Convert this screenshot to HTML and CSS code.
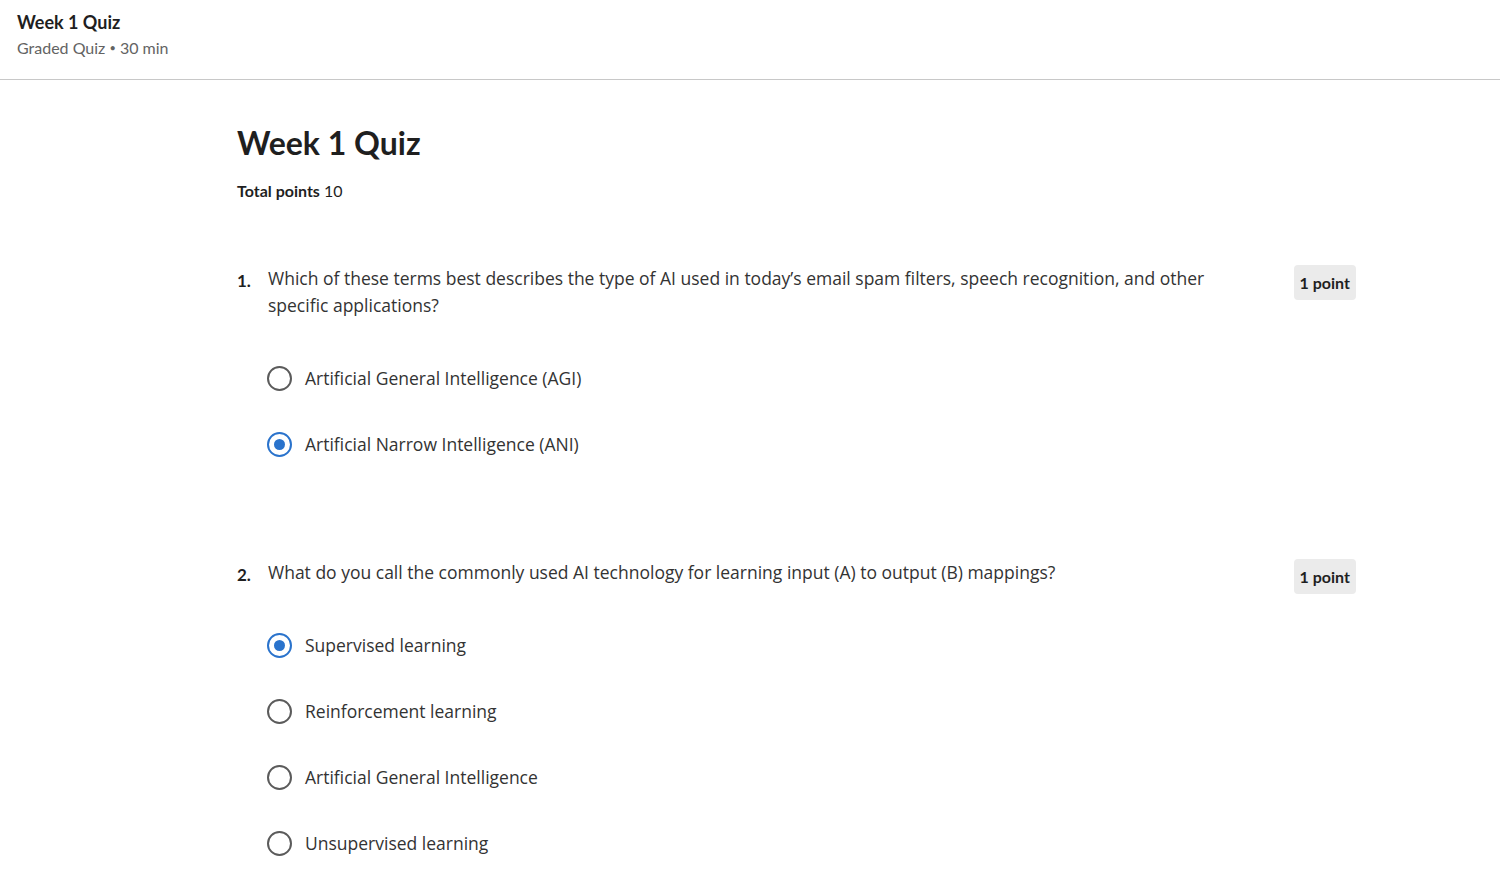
FILE: index.html
```html
<!DOCTYPE html>
<html>
<head>
<meta charset="utf-8">
<link rel="stylesheet" href="styles.css">
</head>
<body>
<header class="topbar">
  <div class="topbar-title">Week 1 Quiz</div>
  <div class="topbar-sub">Graded Quiz <span class="dot">•</span> 30 min</div>
</header>
<main class="content">
  <h1 class="quiz-title">Week 1 Quiz</h1>
  <div class="total"><strong>Total points</strong> 10</div>

  <section class="question q1">
    <div class="q-head">
      <span class="q-num">1.</span>
      <p class="q-text">Which of these terms best describes the type of AI used in today’s email spam filters, speech recognition, and other specific applications?</p>
      <span class="points">1 point</span>
    </div>
    <ul class="options">
      <li class="option"><span class="radio"></span><span>Artificial General Intelligence (AGI)</span></li>
      <li class="option"><span class="radio checked"></span><span>Artificial Narrow Intelligence (ANI)</span></li>
    </ul>
  </section>

  <section class="question q2">
    <div class="q-head">
      <span class="q-num">2.</span>
      <p class="q-text">What do you call the commonly used AI technology for learning input (A) to output (B) mappings?</p>
      <span class="points">1 point</span>
    </div>
    <ul class="options">
      <li class="option"><span class="radio checked"></span><span>Supervised learning</span></li>
      <li class="option"><span class="radio"></span><span>Reinforcement learning</span></li>
      <li class="option"><span class="radio"></span><span>Artificial General Intelligence</span></li>
      <li class="option"><span class="radio"></span><span>Unsupervised learning</span></li>
    </ul>
  </section>
</main>
</body>
</html>
```
FILE: styles.css
```css
* { box-sizing: border-box; }
html, body { margin: 0; padding: 0; background: #fff; }
body {
  font-family: "Open Sans", "Noto Sans", sans-serif;
  color: #1f1f1f;
  overflow: hidden;
  height: 890px;
}
.topbar {
  height: 80px;
  border-bottom: 1px solid #c8c8c8;
  padding: 10px 17px 0;
  font-family: "Lato", "Noto Sans", sans-serif;
}
.topbar-title {
  font-size: 18px;
  font-weight: 700;
  line-height: 24px;
  color: #1f1f1f;
}
.topbar-sub {
  margin-top: 3px;
  font-size: 16px;
  line-height: 22px;
  color: #636363;
}
.topbar-sub .dot { font-size: 11px; vertical-align: 2px; }
.content {
  padding: 0 0 0 237px;
  width: 1356px;
}
.quiz-title {
  font-family: "Lato", "Noto Sans", sans-serif;
  font-size: 32px;
  font-weight: 700;
  margin: 41px 0 0;
  line-height: 44px;
  color: #1f1f1f;
}
.total {
  font-family: "Lato", "Noto Sans", sans-serif;
  font-size: 16px;
  line-height: 22px;
  margin-top: 15px;
  color: #1f1f1f;
}
.total strong { font-weight: 700; }
.question { margin-top: 63px; }
.question.q2 { margin-top: 101px; }
.q-head {
  display: flex;
  align-items: flex-start;
}
.q-num {
  width: 31px;
  flex: none;
  font-family: "Lato", "Noto Sans", sans-serif;
  font-weight: 700;
  font-size: 17px;
  line-height: 27px;
  padding-top: 2px;
}
.q-text {
  margin: 0;
  flex: 1;
  font-size: 17.5px;
  line-height: 27px;
  color: #333;
  padding-right: 70px;
}
.points {
  flex: none;
  background: #ebebeb;
  border-radius: 4px;
  font-family: "Lato", "Noto Sans", sans-serif;
  font-weight: 700;
  font-size: 16px;
  line-height: 22px;
  padding: 7px 6px 6px;
  margin-top: 0;
  color: #1f1f1f;
}
.options {
  list-style: none;
  margin: 0;
  padding: 45px 0 0 30px;
  display: flex;
  flex-direction: column;
  gap: 38px;
}
.q2 .options { padding-top: 37px; }
.option {
  display: flex;
  align-items: center;
  gap: 13px;
  font-size: 17.5px;
  line-height: 28px;
  color: #333;
}
.radio {
  width: 25px;
  height: 25px;
  border-radius: 50%;
  border: 2px solid #5b5b5b;
  flex: none;
  position: relative;
}
.radio.checked {
  border: 2.5px solid #2a73cc;
}
.radio.checked::after {
  content: "";
  position: absolute;
  left: 50%;
  top: 50%;
  width: 11px;
  height: 11px;
  margin: -5.5px 0 0 -5.5px;
  border-radius: 50%;
  background: #2a73cc;
}
```
